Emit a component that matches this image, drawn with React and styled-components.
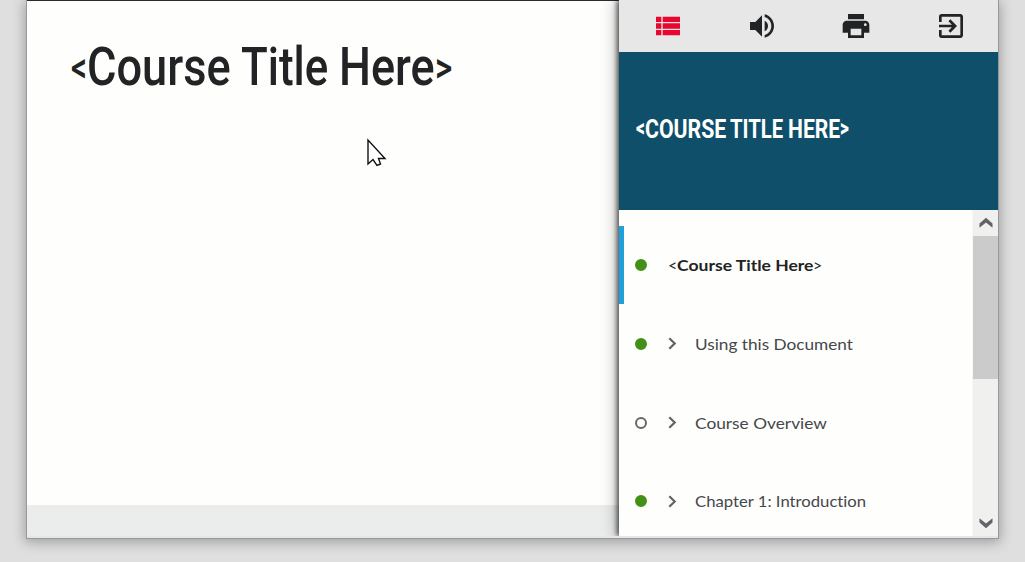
import React, { useLayoutEffect, useRef, useState } from "react";
import styled, { createGlobalStyle } from "styled-components";
import { MdViewList, MdVolumeUp, MdPrint, MdExitToApp } from "react-icons/md";

const GlobalStyle = createGlobalStyle`
  * { box-sizing: border-box; }
  html, body { margin: 0; background: #dfdfe0; overflow: hidden; }
`;

const Page = styled.div`
  height: 562px;
  padding: 0 26px;
  overflow: hidden;
`;

const Frame = styled.main`
  display: flex;
  height: 539px;
  border: solid #97979c;
  border-width: 0 1px 1px;
  padding-bottom: 2px;
  background: #e6e6e7;
  box-shadow: 0 2px 12px 1px rgba(0, 0, 0, 0.3);
`;

const Stage = styled.section`
  display: flex;
  flex-direction: column;
  width: 592px;
  border-top: 1px solid #2c2b30;
  background: #fefefd;
`;

const Slide = styled.div`
  flex: 1;
  padding: 36px 0 0 44px;
`;

const Footer = styled.footer`
  height: 31px;
  background: #ebecec;
`;

const CourseHeading = styled.h1`
  display: flex;
  margin: 0;
  height: 60px;
  font: 500 53px/60px Roboto, sans-serif;
  color: #222324;
`;

const FitBox = styled.span`
  display: block;
  flex: none;
  width: ${(p) => p.$width}px;
  margin-left: ${(p) => p.$gap || 0}px;
  font-size: ${(p) => p.$size || "inherit"};
  font-weight: ${(p) => p.$weight || "inherit"};
  font-variant-ligatures: none;
  white-space: pre;
`;

const FitText = styled.span`
  display: inline-block;
  transform-origin: 0 50%;
`;

function Fit({ width, gap, size, weight, children }) {
  const ref = useRef(null);
  const [scale, setScale] = useState(1);
  useLayoutEffect(() => {
    setScale(width / ref.current.offsetWidth);
  }, [width, children]);
  return (
    <FitBox $width={width} $gap={gap} $size={size} $weight={weight}>
      <FitText ref={ref} style={{ transform: `scaleX(${scale})` }}>{children}</FitText>
    </FitBox>
  );
}

const Sidebar = styled.aside`
  position: relative;
  display: flex;
  flex-direction: column;
  width: 379px;
  background: #fefefd;
  box-shadow: -2px 0 5px rgba(0, 0, 0, 0.65), -5px 0 14px rgba(0, 0, 0, 0.2);
  clip-path: inset(0 0 0 -24px);
`;

const Toolbar = styled.nav`
  display: grid;
  grid-template-columns: repeat(4, 1fr);
  height: 52px;
  background: #e7e7e7;
`;

const ToolButton = styled.button`
  display: flex;
  align-items: center;
  justify-content: center;
  padding: 0 0 0 ${(p) => (p.$active ? 3 : 1)}px;
  border: 0;
  background: none;
  color: ${(p) => (p.$active ? "#e9062f" : "#222324")};
  svg { width: 32px; height: 32px; }
`;

const Banner = styled.header`
  display: flex;
  align-items: center;
  height: 158px;
  padding: 0 0 4px 17px;
  background: #0f4f69;
  color: #fff;
  font: 700 26px/32px Roboto, sans-serif;
`;

const Outline = styled.div`
  display: flex;
  height: 326px;
  overflow: hidden;
`;

const Topics = styled.div`
  flex: 1;
  padding-top: 16px;
`;

const Topic = styled.div`
  display: flex;
  align-items: center;
  height: 78px;
  margin-bottom: 0.75px;
  padding-left: 11px;
  border-left: 5px solid ${(p) => (p.$current ? "#209fda" : "transparent")};
  color: ${(p) => (p.$current ? "#222324" : "#46474a")};
  font: ${(p) => (p.$current ? 700 : 400)} 16px/24px Lato, sans-serif;
`;

const Status = styled.span`
  width: 12px;
  height: 12px;
  margin-right: 21px;
  border-radius: 50%;
  border: ${(p) => (p.$done ? "6px solid #429015" : "2px solid #66676a")};
`;

const Chevron = styled.svg`
  width: 9px;
  height: 13px;
  margin-right: 18px;
`;

const Scrollbar = styled.div`
  display: flex;
  flex-direction: column;
  justify-content: space-between;
  width: 26px;
  border-left: 1px solid #f7f7f6;
  background: #f0f0ef;
`;

const ScrollButton = styled.div`
  display: flex;
  align-items: center;
  justify-content: center;
  height: 26px;
  padding-bottom: ${(p) => (p.$down ? 0 : 2)}px;
  padding-top: ${(p) => (p.$down ? 1 : 0)}px;
  svg { display: block; width: 14px; height: 11px; transform: ${(p) => (p.$down ? "scaleY(-1)" : "none")}; }
`;

const Thumb = styled.div`
  height: 143px;
  margin-bottom: auto;
  background: #cbcbcc;
`;

const Cursor = styled.svg`
  position: absolute;
  left: 366px;
  top: 138px;
  width: 22px;
  height: 30px;
`;

const topics = [
  { title: "Using this Document", width: 158, done: true },
  { title: "Course Overview", width: 132, done: false },
  { title: "Chapter 1: Introduction", width: 171, done: true },
];

const Arrow = () => (
  <svg viewBox="0 0 14 11"><path d="M.5 6.600 7 .8l6.500 5.800v4.100L7 5.500 .5 10.700Z" fill="#626366" /></svg>
);

export default function App() {
  return (
    <Page>
      <GlobalStyle />
      <Frame>
        <Stage>
          <Slide>
            <CourseHeading>
              <Fit width={16} size="43px" weight={500}>{"<"}</Fit>
              <Fit width={144}>Course</Fit>
              <Fit width={87} gap={10}>Title</Fit>
              <Fit width={96} gap={11}>Here</Fit>
              <Fit width={17} size="43px" weight={500}>{">"}</Fit>
            </CourseHeading>
          </Slide>
          <Footer />
        </Stage>
        <Sidebar>
          <Toolbar>
            <ToolButton $active aria-label="Outline"><MdViewList /></ToolButton>
            <ToolButton aria-label="Volume"><MdVolumeUp /></ToolButton>
            <ToolButton aria-label="Print"><MdPrint /></ToolButton>
            <ToolButton aria-label="Exit"><MdExitToApp /></ToolButton>
          </Toolbar>
          <Banner>
            <Fit width={9} size="23px" weight={900}>{"<"}</Fit>
            <Fit width={81}>COURSE</Fit>
            <Fit width={53} gap={4}>TITLE</Fit>
            <Fit width={52} gap={5}>HERE</Fit>
            <Fit width={9} size="23px" weight={900}>{">"}</Fit>
          </Banner>
          <Outline>
            <Topics>
              <Topic $current>
                <Status $done />
                <Fit width={9} weight={400}>{"<"}</Fit>
                <Fit width={136}>Course Title Here</Fit>
                <Fit width={9} weight={400}>{">"}</Fit>
              </Topic>
              {topics.map((t) => (
                <Topic key={t.title}>
                  <Status $done={t.done} />
                  <Chevron viewBox="0 0 9 13"><path d="M1.300 1.300 6.700 6.500 1.300 11.700" fill="none" stroke="#626366" strokeWidth="2.200" /></Chevron>
                  <Fit width={t.width}>{t.title}</Fit>
                </Topic>
              ))}
            </Topics>
            <Scrollbar>
              <ScrollButton><Arrow /></ScrollButton>
              <Thumb />
              <ScrollButton $down><Arrow /></ScrollButton>
            </Scrollbar>
          </Outline>
        </Sidebar>
      </Frame>
      <Cursor viewBox="0 0 22 30">
        <path d="M2 2v24l5-4.500 4 6 3.500-1.500-2-5.500H19Z" fill="#fff" stroke="#111" strokeWidth="1.400" />
      </Cursor>
    </Page>
  );
}
